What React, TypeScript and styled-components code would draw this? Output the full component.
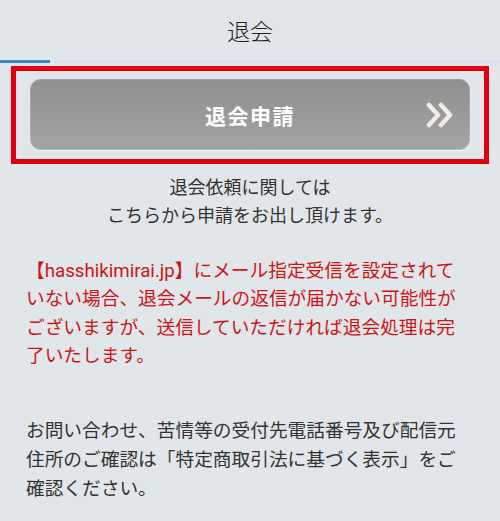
import styled, { createGlobalStyle } from "styled-components";

const GlobalStyle = createGlobalStyle`
	body {
		margin: 0;
		background: #e1e6ea;
		font-family: Roboto, "Noto Sans CJK JP", sans-serif;
	}
`;

function Chevrons() {
	return (
		<svg width="30" height="26" viewBox="0 0 30 26">
			<path
				d="M3 3 L12 13 L3 23 M15 3 L24 13 L15 23"
				fill="none"
				stroke="#f1ede6"
				strokeWidth="4.5"
				strokeLinecap="round"
				strokeLinejoin="round"
			/>
		</svg>
	);
}

function App() {
	return (
		<>
			<GlobalStyle />
			<Page>
				<Title>退会</Title>
				<TabLine>
					<TabActive />
				</TabLine>
				<Highlight>
					<ApplyButton>
						<ButtonLabel>退会申請</ButtonLabel>
						<ArrowSlot>
							<Chevrons />
						</ArrowSlot>
					</ApplyButton>
				</Highlight>
				<Lead>
					退会依頼に関しては
					<br />
					こちらから申請をお出し頂けます。
				</Lead>
				<Notice>
					【hasshikimirai.jp】にメール指定受信を設定されていない場合、退会メールの返信が届かない可能性がございますが、送信していただければ退会処理は完了いたします。
				</Notice>
				<Info>
					お問い合わせ、苦情等の受付先電話番号及び配信元住所のご確認は「特定商取引法に基づく表示」をご確認ください。
				</Info>
			</Page>
		</>
	);
}

const Page = styled.div`
	display: flex;
	flex-direction: column;
	width: 500px;
	min-height: 521px;
`;

const Title = styled.h1`
	margin: 0;
	height: 60px;
	display: flex;
	align-items: center;
	justify-content: center;
	font-family: "Noto Sans CJK JP", sans-serif;
	font-size: 23px;
	font-weight: 300;
	color: #222;
`;

const TabLine = styled.div`
	height: 3px;
	background: #dde0ee;
`;

const TabActive = styled.div`
	width: 50px;
	height: 3px;
	background: #3f86c6;
`;

const Highlight = styled.div`
	margin: 3px 11px 0 11px;
	border: 5px solid #e0000d;
	padding: 8px 14px 9px 14px;
`;

const ApplyButton = styled.div`
	position: relative;
	height: 71px;
	border-radius: 11px;
	background: linear-gradient(#8f8f8f, #a4a4a4);
	box-shadow: 0 1px 1px rgba(255, 255, 255, 0.9), inset 0 0 0 1px rgba(255, 255, 255, 0.15);
	display: flex;
	align-items: center;
	justify-content: center;
`;

const ButtonLabel = styled.span`
	color: #fff;
	font-size: 21px;
	font-weight: 700;
	letter-spacing: 1.5px;
`;

const ArrowSlot = styled.span`
	position: absolute;
	right: 14px;
	top: 50%;
	transform: translateY(-50%);
	display: flex;
`;

const Lead = styled.p`
	margin: 10px 0 0 0;
	text-align: center;
	font-size: 18px;
	line-height: 28px;
	color: #333;
`;

const Notice = styled.p`
	margin: 27px 30px 0 26px;
	font-size: 18.7px;
	line-height: 28.3px;
	color: #cc1518;
`;

const Info = styled.p`
	margin: 47px 30px 0 26px;
	font-size: 18.7px;
	line-height: 29px;
	color: #333;
`;

export default App;
